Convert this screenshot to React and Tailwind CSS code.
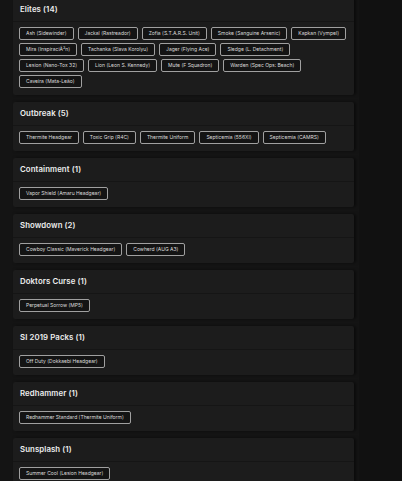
import React from "react";

// skin collections shown as cards with chip lists
const collections = [
  {
    name: "Elites",
    items: [
      "Ash (Sidewinder)",
      "Jackal (Rastreador)",
      "Zofia (S.T.A.R.S. Unit)",
      "Smoke (Sanguine Arsenic)",
      "Kapkan (Vympel)",
      "Mira (InspiraciÃ³n)",
      "Tachanka (Slava Korolyu)",
      "Jager (Flying Ace)",
      "Sledge (L. Detachment)",
      "Lesion (Nano-Tox 32)",
      "Lion (Leon S. Kennedy)",
      "Mute (F Squadron)",
      "Warden (Spec Ops: Beach)",
      "Caveira (Mata-Leão)",
    ],
  },
  {
    name: "Outbreak",
    items: [
      "Thermite Headgear",
      "Toxic Grip (R4C)",
      "Thermite Uniform",
      "Septicemia (556XI)",
      "Septicemia (CAMRS)",
    ],
  },
  { name: "Containment", items: ["Vapor Shield (Amaru Headgear)"] },
  {
    name: "Showdown",
    items: ["Cowboy Classic (Maverick Headgear)", "Cowherd (AUG A3)"],
  },
  { name: "Doktors Curse", items: ["Perpetual Sorrow (MP5)"] },
  { name: "SI 2019 Packs", items: ["Off Duty (Dokkaebi Headgear)"] },
  { name: "Redhammer", items: ["Redhammer Standard (Thermite Uniform)"] },
  { name: "Sunsplash", items: ["Summer Cool (Lesion Headgear)"] },
];

const CollectionCard = ({ name, items }) => (
  <div className="bg-[#1c1c1c] rounded-[2px] shadow-[2px_0_3px_rgba(0,0,0,0.5)] overflow-hidden">
    {/* Header */}
    <div className="h-[24px] px-[7px] flex items-center border-b border-[#151515]">
      <h3 className="text-[7.8px] font-semibold text-[#ededed] tracking-[0.1px]">
        {name} ({items.length})
      </h3>
    </div>

    {/* Chips */}
    <div className="px-[6px] pt-[5px] pb-[7px] flex flex-wrap gap-x-[4px] gap-y-[3px]">
      {items.map((item) => (
        <span
          key={item}
          className="h-[13px] px-[6px] flex items-center border border-[#a0a0a0] rounded-[2px] bg-[#141414] text-[5px] leading-none text-[#dcdcdc] whitespace-nowrap"
        >
          {item}
        </span>
      ))}
    </div>
  </div>
);

export default function App() {
  return (
    <div
      className="min-h-[481px] bg-[#111111] overflow-hidden"
      style={{ fontFamily: "Inter, 'Noto Sans', sans-serif" }}
    >
      <div className="w-[359px] min-h-[485px] bg-[#141414] pl-[13px] pr-[5px] mt-[-2px] flex flex-col gap-[7px]">
        {collections.map((c) => (
          <CollectionCard key={c.name} {...c} />
        ))}
      </div>
    </div>
  );
}
